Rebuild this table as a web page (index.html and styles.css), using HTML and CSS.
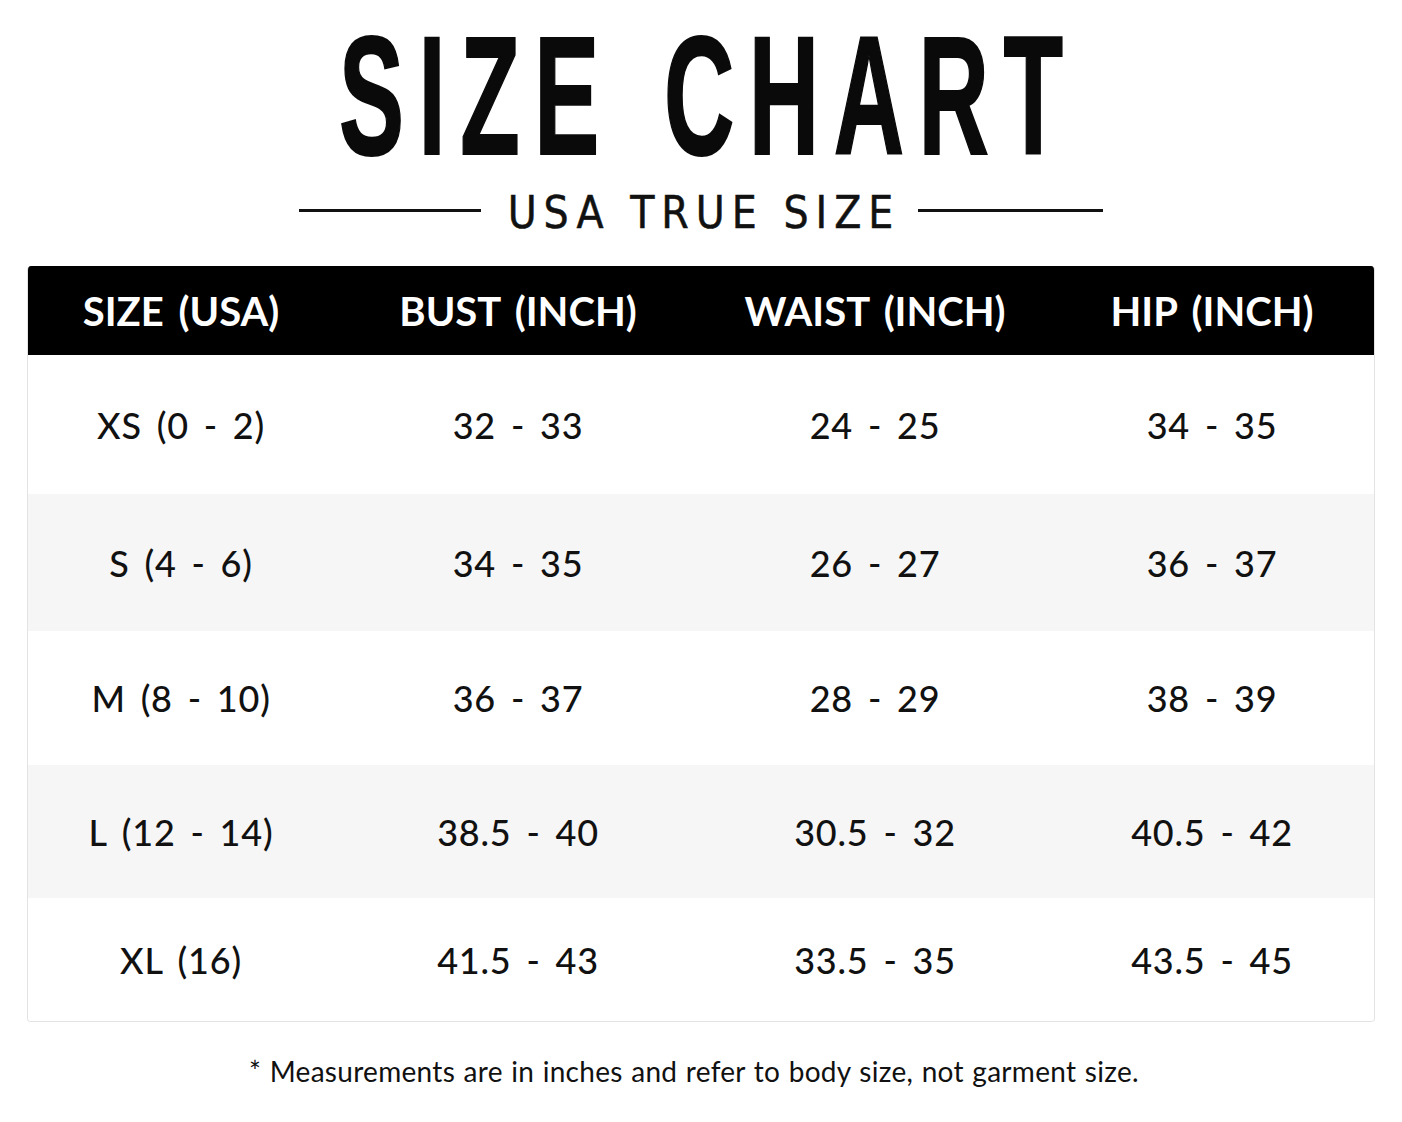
FILE: index.html
```html
<!DOCTYPE html>
<html lang="en">
<head>
<meta charset="utf-8">
<title>Size Chart</title>
<link rel="stylesheet" href="styles.css">
</head>
<body>
<main class="page">
  <header class="heading">
    <h1 class="title"><span class="title-text">SIZE CHART</span></h1>
    <div class="subtitle">
      <span class="rule"></span>
      <span class="subtitle-text">USA TRUE SIZE</span>
      <span class="rule rule-right"></span>
    </div>
  </header>

  <section class="chart">
    <div class="row head">
      <div class="cell">SIZE (USA)</div>
      <div class="cell">BUST (INCH)</div>
      <div class="cell">WAIST (INCH)</div>
      <div class="cell">HIP (INCH)</div>
    </div>
    <div class="row r1">
      <div class="cell">XS (0 - 2)</div>
      <div class="cell">32 - 33</div>
      <div class="cell">24 - 25</div>
      <div class="cell">34 - 35</div>
    </div>
    <div class="row r2 alt">
      <div class="cell">S (4 - 6)</div>
      <div class="cell">34 - 35</div>
      <div class="cell">26 - 27</div>
      <div class="cell">36 - 37</div>
    </div>
    <div class="row r3">
      <div class="cell">M (8 - 10)</div>
      <div class="cell">36 - 37</div>
      <div class="cell">28 - 29</div>
      <div class="cell">38 - 39</div>
    </div>
    <div class="row r4 alt">
      <div class="cell">L (12 - 14)</div>
      <div class="cell">38.5 - 40</div>
      <div class="cell">30.5 - 32</div>
      <div class="cell">40.5 - 42</div>
    </div>
    <div class="row r5">
      <div class="cell">XL (16)</div>
      <div class="cell">41.5 - 43</div>
      <div class="cell">33.5 - 35</div>
      <div class="cell">43.5 - 45</div>
    </div>
  </section>

  <p class="note">* Measurements are in inches and refer to body size, not garment size.</p>
</main>
</body>
</html>
```

FILE: styles.css
```css
* { box-sizing: border-box; }

html, body {
  margin: 0;
  padding: 0;
  background: #ffffff;
}

body {
  font-family: "Lato", "Liberation Sans", sans-serif;
  color: #111111;
}

.page {
  width: 1402px;
  padding: 12px 27px 0 27px;
}

.heading {
  display: flex;
  flex-direction: column;
  align-items: center;
}

.title {
  margin: 0;
  font-family: "Liberation Sans", "Arial", sans-serif;
  font-weight: 700;
  font-size: 168px;
  line-height: 168px;
  height: 168px;
  color: #0a0a0a;
  text-align: center;
  width: 100%;
}

.title-text {
  display: inline-block;
  letter-spacing: 25px;
  word-spacing: 15px;
  padding-left: 25px;
  -webkit-text-stroke: 2px #0a0a0a;
  transform: scaleX(0.58);
  transform-origin: center;
  white-space: nowrap;
}

.subtitle {
  display: flex;
  align-items: center;
  justify-content: center;
  height: 57px;
  padding-top: 3px;
}

.rule {
  display: block;
  width: 182px;
  height: 3px;
  background: #111;
}

.rule-right { width: 185px; }

.subtitle-text {
  font-family: "DejaVu Sans Condensed", "Liberation Sans Narrow", "Liberation Sans", sans-serif;
  font-size: 44px;
  line-height: 44px;
  font-weight: 400;
  letter-spacing: 7px;
  margin: 6px 18px 0 27px;
  color: #111;
  -webkit-text-stroke: 0.5px #111;
}

.chart {
  margin-top: 29px;
  width: 1348px;
  border: 1px solid #e3e3e3;
  border-top: none;
  border-radius: 4px;
  overflow: hidden;
}

.row {
  display: grid;
  grid-template-columns: 306px 368px 346px 328px;
  align-items: center;
  background: #ffffff;
}

.row.alt { background: #f6f6f6; }

.cell {
  text-align: center;
  font-size: 36px;
  font-weight: 500;
  letter-spacing: 0.8px;
  word-spacing: 5px;
  color: #111;
}

.head {
  background: #000;
  height: 89px;
  margin: 0 -1px;
  padding: 0 1px;
}

.head .cell {
  color: #fff;
  font-size: 40px;
  font-weight: 700;
  letter-spacing: 0;
  word-spacing: 5px;
}

.r1 { height: 139px; }
.r2 { height: 137px; }
.r3 { height: 134px; }
.r4 { height: 133px; }
.r5 { height: 123px; }

.note {
  margin: 32px 0 0 0;
  padding-right: 14px;
  text-align: center;
  font-size: 28px;
  font-weight: 400;
  color: #111;
  letter-spacing: 0.3px;
  word-spacing: 1px;
}
```
